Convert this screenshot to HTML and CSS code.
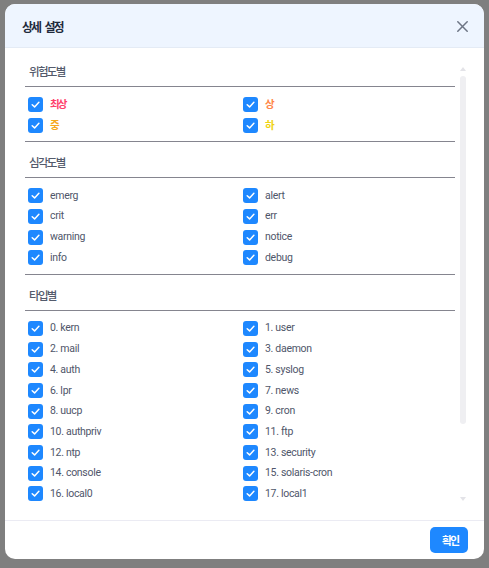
FILE: index.html
```html
<!DOCTYPE html>
<html lang="ko">
<head>
<meta charset="utf-8">
<title>상세 설정</title>
<link rel="stylesheet" href="styles.css">
</head>
<body>
<div class="backdrop">
  <div class="modal">
    <header class="modal-header">
      <h2 class="modal-title">상세 설정</h2>
      <button class="close" type="button" aria-label="닫기">
        <svg width="11" height="11" viewBox="0 0 11 11"><path d="M0.8 0.8L10.2 10.2M10.2 0.8L0.8 10.2" stroke="#6d7585" stroke-width="1.5" stroke-linecap="round"/></svg>
      </button>
    </header>
    <div class="modal-body">
      <div class="scroll">
        <section class="group">
          <h3 class="group-title">위험도별</h3>
          <div class="options">
            <label class="opt"><span class="cb"><svg viewBox="0 0 15 15"><path d="M4.2 7.7L6.6 9.9L10.9 5.3"/></svg></span><span class="txt ko risk-1">최상</span></label>
            <label class="opt"><span class="cb"><svg viewBox="0 0 15 15"><path d="M4.2 7.7L6.6 9.9L10.9 5.3"/></svg></span><span class="txt ko risk-2">상</span></label>
            <label class="opt"><span class="cb"><svg viewBox="0 0 15 15"><path d="M4.2 7.7L6.6 9.9L10.9 5.3"/></svg></span><span class="txt ko risk-3">중</span></label>
            <label class="opt"><span class="cb"><svg viewBox="0 0 15 15"><path d="M4.2 7.7L6.6 9.9L10.9 5.3"/></svg></span><span class="txt ko risk-4">하</span></label>
          </div>
        </section>
        <section class="group">
          <h3 class="group-title">심각도별</h3>
          <div class="options">
            <label class="opt"><span class="cb"><svg viewBox="0 0 15 15"><path d="M4.2 7.7L6.6 9.9L10.9 5.3"/></svg></span><span class="txt">emerg</span></label>
            <label class="opt"><span class="cb"><svg viewBox="0 0 15 15"><path d="M4.2 7.7L6.6 9.9L10.9 5.3"/></svg></span><span class="txt">alert</span></label>
            <label class="opt"><span class="cb"><svg viewBox="0 0 15 15"><path d="M4.2 7.7L6.6 9.9L10.9 5.3"/></svg></span><span class="txt">crit</span></label>
            <label class="opt"><span class="cb"><svg viewBox="0 0 15 15"><path d="M4.2 7.7L6.6 9.9L10.9 5.3"/></svg></span><span class="txt">err</span></label>
            <label class="opt"><span class="cb"><svg viewBox="0 0 15 15"><path d="M4.2 7.7L6.6 9.9L10.9 5.3"/></svg></span><span class="txt">warning</span></label>
            <label class="opt"><span class="cb"><svg viewBox="0 0 15 15"><path d="M4.2 7.7L6.6 9.9L10.9 5.3"/></svg></span><span class="txt">notice</span></label>
            <label class="opt"><span class="cb"><svg viewBox="0 0 15 15"><path d="M4.2 7.7L6.6 9.9L10.9 5.3"/></svg></span><span class="txt">info</span></label>
            <label class="opt"><span class="cb"><svg viewBox="0 0 15 15"><path d="M4.2 7.7L6.6 9.9L10.9 5.3"/></svg></span><span class="txt">debug</span></label>
          </div>
        </section>
        <section class="group">
          <h3 class="group-title">타입별</h3>
          <div class="options">
            <label class="opt"><span class="cb"><svg viewBox="0 0 15 15"><path d="M4.2 7.7L6.6 9.9L10.9 5.3"/></svg></span><span class="txt">0. kern</span></label>
            <label class="opt"><span class="cb"><svg viewBox="0 0 15 15"><path d="M4.2 7.7L6.6 9.9L10.9 5.3"/></svg></span><span class="txt">1. user</span></label>
            <label class="opt"><span class="cb"><svg viewBox="0 0 15 15"><path d="M4.2 7.7L6.6 9.9L10.9 5.3"/></svg></span><span class="txt">2. mail</span></label>
            <label class="opt"><span class="cb"><svg viewBox="0 0 15 15"><path d="M4.2 7.7L6.6 9.9L10.9 5.3"/></svg></span><span class="txt">3. daemon</span></label>
            <label class="opt"><span class="cb"><svg viewBox="0 0 15 15"><path d="M4.2 7.7L6.6 9.9L10.9 5.3"/></svg></span><span class="txt">4. auth</span></label>
            <label class="opt"><span class="cb"><svg viewBox="0 0 15 15"><path d="M4.2 7.7L6.6 9.9L10.9 5.3"/></svg></span><span class="txt">5. syslog</span></label>
            <label class="opt"><span class="cb"><svg viewBox="0 0 15 15"><path d="M4.2 7.7L6.6 9.9L10.9 5.3"/></svg></span><span class="txt">6. lpr</span></label>
            <label class="opt"><span class="cb"><svg viewBox="0 0 15 15"><path d="M4.2 7.7L6.6 9.9L10.9 5.3"/></svg></span><span class="txt">7. news</span></label>
            <label class="opt"><span class="cb"><svg viewBox="0 0 15 15"><path d="M4.2 7.7L6.6 9.9L10.9 5.3"/></svg></span><span class="txt">8. uucp</span></label>
            <label class="opt"><span class="cb"><svg viewBox="0 0 15 15"><path d="M4.2 7.7L6.6 9.9L10.9 5.3"/></svg></span><span class="txt">9. cron</span></label>
            <label class="opt"><span class="cb"><svg viewBox="0 0 15 15"><path d="M4.2 7.7L6.6 9.9L10.9 5.3"/></svg></span><span class="txt">10. authpriv</span></label>
            <label class="opt"><span class="cb"><svg viewBox="0 0 15 15"><path d="M4.2 7.7L6.6 9.9L10.9 5.3"/></svg></span><span class="txt">11. ftp</span></label>
            <label class="opt"><span class="cb"><svg viewBox="0 0 15 15"><path d="M4.2 7.7L6.6 9.9L10.9 5.3"/></svg></span><span class="txt">12. ntp</span></label>
            <label class="opt"><span class="cb"><svg viewBox="0 0 15 15"><path d="M4.2 7.7L6.6 9.9L10.9 5.3"/></svg></span><span class="txt">13. security</span></label>
            <label class="opt"><span class="cb"><svg viewBox="0 0 15 15"><path d="M4.2 7.7L6.6 9.9L10.9 5.3"/></svg></span><span class="txt">14. console</span></label>
            <label class="opt"><span class="cb"><svg viewBox="0 0 15 15"><path d="M4.2 7.7L6.6 9.9L10.9 5.3"/></svg></span><span class="txt">15. solaris-cron</span></label>
            <label class="opt"><span class="cb"><svg viewBox="0 0 15 15"><path d="M4.2 7.7L6.6 9.9L10.9 5.3"/></svg></span><span class="txt">16. local0</span></label>
            <label class="opt"><span class="cb"><svg viewBox="0 0 15 15"><path d="M4.2 7.7L6.6 9.9L10.9 5.3"/></svg></span><span class="txt">17. local1</span></label>
            <label class="opt"><span class="cb"><svg viewBox="0 0 15 15"><path d="M4.2 7.7L6.6 9.9L10.9 5.3"/></svg></span><span class="txt">18. local2</span></label>
            <label class="opt"><span class="cb"><svg viewBox="0 0 15 15"><path d="M4.2 7.7L6.6 9.9L10.9 5.3"/></svg></span><span class="txt">19. local3</span></label>
            <label class="opt"><span class="cb"><svg viewBox="0 0 15 15"><path d="M4.2 7.7L6.6 9.9L10.9 5.3"/></svg></span><span class="txt">20. local4</span></label>
            <label class="opt"><span class="cb"><svg viewBox="0 0 15 15"><path d="M4.2 7.7L6.6 9.9L10.9 5.3"/></svg></span><span class="txt">21. local5</span></label>
            <label class="opt"><span class="cb"><svg viewBox="0 0 15 15"><path d="M4.2 7.7L6.6 9.9L10.9 5.3"/></svg></span><span class="txt">22. local6</span></label>
            <label class="opt"><span class="cb"><svg viewBox="0 0 15 15"><path d="M4.2 7.7L6.6 9.9L10.9 5.3"/></svg></span><span class="txt">23. local7</span></label>
          </div>
        </section>
      </div>
      <div class="scrollbar" aria-hidden="true">
        <span class="sb-btn sb-up"></span>
        <span class="sb-track"><span class="sb-thumb"></span></span>
        <span class="sb-btn sb-down"></span>
      </div>
    </div>
    <footer class="modal-footer">
      <button class="btn-primary" type="button">확인</button>
    </footer>
  </div>
</div>
</body>
</html>
```
FILE: styles.css
```css
* { box-sizing: border-box; }
html, body { margin: 0; padding: 0; }
body {
  width: 489px;
  height: 568px;
  overflow: hidden;
  font-family: "Noto Sans CJK KR", "Noto Sans", sans-serif;
  background: #7f7f7f;
}
.backdrop {
  height: 100%;
  padding: 4px 5px 9px;
}
.modal {
  height: 555px;
  background: #fff;
  border-radius: 10px;
  overflow: hidden;
  display: flex;
  flex-direction: column;
}
.modal-header {
  height: 44px;
  flex: none;
  background: #eef5ff;
  border-bottom: 1px solid #e4ebf5;
  display: flex;
  align-items: center;
  justify-content: space-between;
  padding: 0 16px 0 17px;
}
.modal-title {
  margin: 0;
  font-size: 12px;
  font-weight: 700;
  letter-spacing: -2px;
  word-spacing: 3px;
  color: #1f2a3c;
  line-height: 17px;
  padding-top: 1px;
}
.close {
  border: 0;
  background: none;
  padding: 0;
  width: 11px;
  height: 11px;
  display: flex;
  margin-top: 1px;
}
.modal-body {
  flex: 1;
  min-height: 0;
  padding: 14px 15px 15px 20px;
  display: flex;
}
.scroll {
  flex: 1;
  min-width: 0;
  height: 100%;
  overflow-y: auto;
  padding-right: 2px;
  scrollbar-width: none;
}
.scrollbar {
  width: 12px;
  flex: none;
  display: flex;
  flex-direction: column;
}
.sb-btn {
  height: 13px;
  flex: none;
  display: flex;
  align-items: center;
  justify-content: center;
}
.sb-btn::before {
  content: "";
  width: 0;
  height: 0;
  border-left: 3px solid transparent;
  border-right: 3px solid transparent;
}
.sb-up::before { border-bottom: 4px solid #e3e3e8; }
.sb-down::before { border-top: 4px solid #e3e3e8; }
.sb-track {
  flex: 1;
  display: flex;
  flex-direction: column;
  padding: 1px 3px 0;
}
.sb-thumb {
  height: 348px;
  background: #efeff2;
  border-radius: 3px;
}
.group-title {
  margin: 0;
  padding: 12px 4px 6px;
  font-size: 11.5px;
  line-height: 17px;
  font-weight: 500;
  letter-spacing: -1.7px;
  color: #545b6c;
  border-bottom: 1px solid #85858f;
}
.group:first-child .group-title { padding-top: 1px; }
.options {
  display: grid;
  grid-template-columns: 1fr 1fr;
  grid-auto-rows: 20.7px;
  padding: 7px 0 6px;
  border-bottom: 1px solid #85858f;
}
.group:last-child .options { border-bottom: 0; padding-bottom: 24px; }
.opt {
  display: flex;
  align-items: center;
  gap: 7px;
  padding-left: 3px;
}
.cb {
  width: 15px;
  height: 15px;
  border-radius: 3px;
  background: #1e88ff;
  flex: none;
  display: flex;
}
.cb svg {
  width: 15px;
  height: 15px;
  fill: none;
  stroke: #fff;
  stroke-width: 1.5;
  stroke-linecap: round;
  stroke-linejoin: round;
}
.txt {
  font-family: Roboto, "Noto Sans CJK KR", sans-serif;
  font-size: 10.5px;
  line-height: 14px;
  letter-spacing: -0.3px;
  color: #4f566a;
}
.txt.ko {
  font-family: "Noto Sans CJK KR", sans-serif;
  font-weight: 700;
  letter-spacing: -2px;
}
.risk-1 { color: #ff3f6c; }
.risk-2 { color: #ff8648; }
.risk-3 { color: #f6a81c; }
.risk-4 { color: #f0d312; }
.modal-footer {
  flex: none;
  border-top: 1px solid #ebebf3;
  padding: 6px 16px;
  display: flex;
  justify-content: flex-end;
}
.btn-primary {
  width: 38px;
  height: 26px;
  border: 0;
  border-radius: 5px;
  background: #1e88ff;
  color: #fff;
  font-family: inherit;
  font-size: 11px;
  font-weight: 700;
  letter-spacing: -2px;
  padding: 0 0 0 2px;
}
```
